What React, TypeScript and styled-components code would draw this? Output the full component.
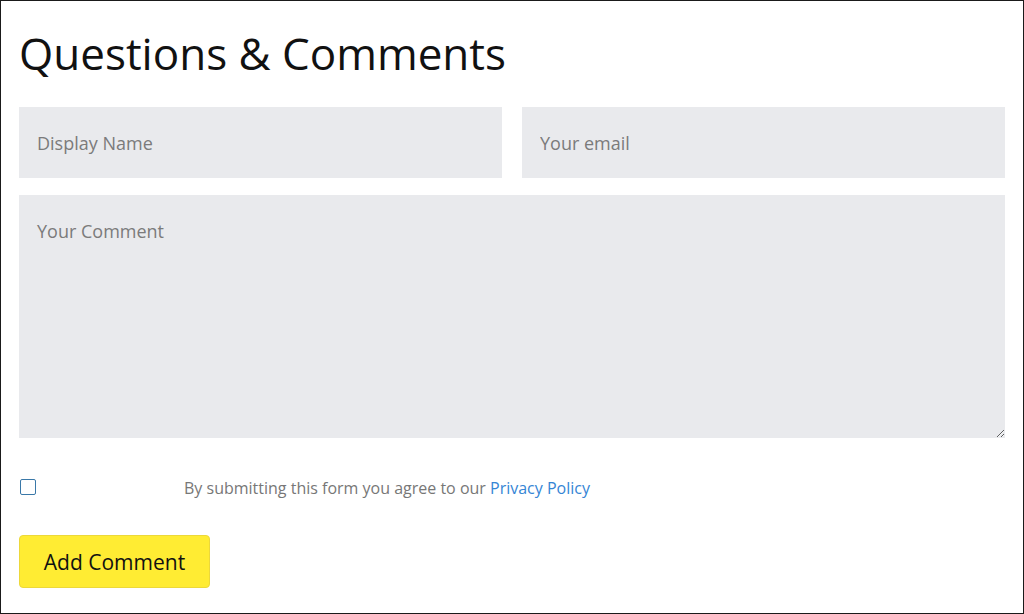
import React from "react";
import styled, { createGlobalStyle } from "styled-components";

const Global = createGlobalStyle`
  html, body { margin: 0; padding: 0; background: #fff; }
  * { box-sizing: border-box; }
`;

const Frame = styled.div`
  width: 1024px;
  height: 614px;
  border: 1px solid #1a1a1a;
  padding: 0 18px 0 18px;
  font-family: "Open Sans", "Liberation Sans", sans-serif;
  display: flex;
  flex-direction: column;
`;

const Title = styled.h1`
  margin: 22px 0 0 0;
  font-size: 44px;
  font-weight: 400;
  line-height: 60px;
  color: #111;
`;

const Row = styled.div`
  display: grid;
  grid-template-columns: 1fr 1fr;
  gap: 20px;
  margin-top: 24px;
`;

const Field = styled.input`
  height: 71px;
  border: none;
  background: #e9eaed;
  padding: 0 18px;
  font-family: inherit;
  font-size: 18px;
  color: #333;
  outline: none;
  &::placeholder { color: #7b7b7b; }
`;

const Area = styled.textarea`
  margin-top: 17px;
  height: 243px;
  border: none;
  background: #e9eaed;
  padding: 24px 18px 20px;
  font-family: inherit;
  font-size: 18px;
  outline: none;
  resize: vertical;
  &::placeholder { color: #7b7b7b; }
`;

const Consent = styled.label`
  display: flex;
  align-items: center;
  margin-top: 40px;
  height: 20px;
`;

const Check = styled.input`
  margin: -3px 0 0 1px;
  width: 16px;
  height: 16px;
  appearance: none;
  border: 1.5px solid #3a78a8;
  border-radius: 2px;
  background: #fff;
`;

const ConsentText = styled.span`
  margin-left: 148px;
  font-size: 16px;
  color: #777;
`;

const Link = styled.a`
  color: #3585d5;
  text-decoration: none;
`;

const Button = styled.button`
  margin-top: 37px;
  align-self: flex-start;
  width: 191px;
  height: 53px;
  background: #ffec33;
  border: 1px solid #ecd83a;
  border-radius: 4px;
  font-family: inherit;
  font-size: 21px;
  color: #111;
  padding: 0;
`;

export default function App() {
  return (
    <>
      <Global />
      <Frame>
        <Title>Questions &amp; Comments</Title>
        <Row>
          <Field placeholder="Display Name" />
          <Field placeholder="Your email" />
        </Row>
        <Area placeholder="Your Comment" />
        <Consent>
          <Check type="checkbox" />
          <ConsentText>
            By submitting this form you agree to our <Link href="#">Privacy Policy</Link>
          </ConsentText>
        </Consent>
        <Button>Add Comment</Button>
      </Frame>
    </>
  );
}
